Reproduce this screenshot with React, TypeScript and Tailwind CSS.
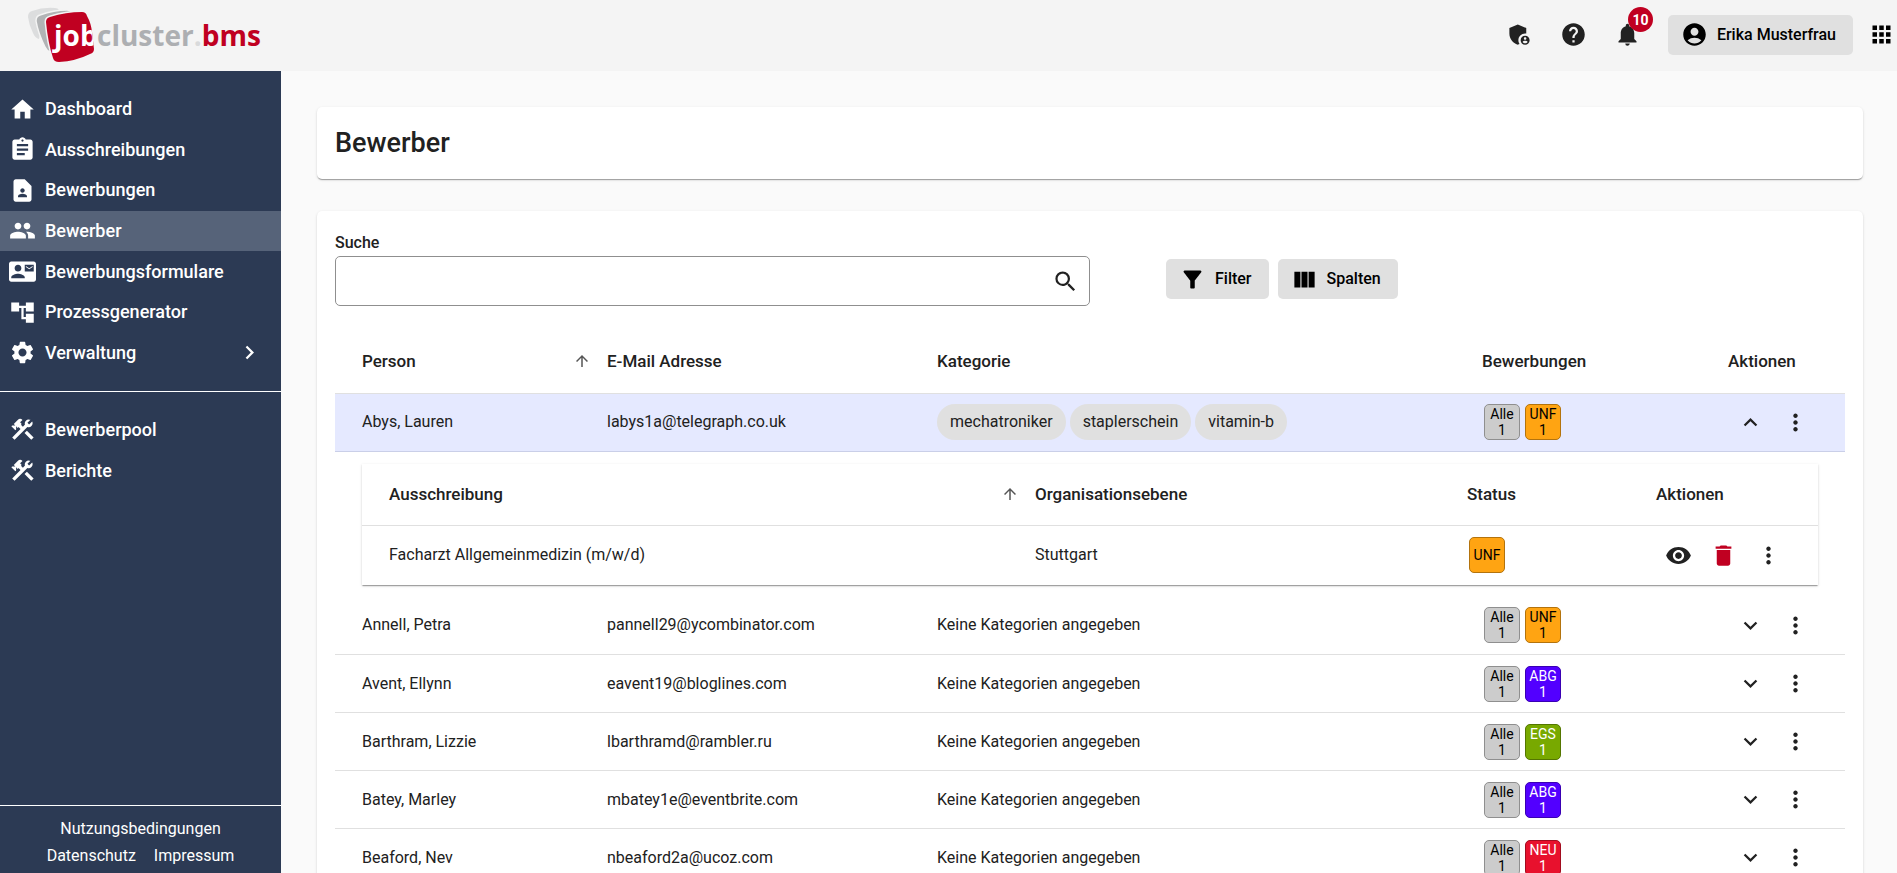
import type { ReactNode } from "react";
import type { IconType } from "react-icons";
import {
  MdAccountCircle,
  MdAccountTree,
  MdAdminPanelSettings,
  MdApps,
  MdArrowUpward,
  MdAssignment,
  MdChevronRight,
  MdConstruction,
  MdContactMail,
  MdContactPage,
  MdDelete,
  MdExpandLess,
  MdExpandMore,
  MdFilterAlt,
  MdHelp,
  MdHome,
  MdMoreVert,
  MdNotifications,
  MdPeople,
  MdSearch,
  MdSettings,
  MdViewColumn,
  MdVisibility,
} from "react-icons/md";

const card =
  "rounded-[5px] bg-white shadow-[0_2px_1px_-1px_rgba(0,0,0,0.2),0_1px_1px_0_rgba(0,0,0,0.14),0_1px_3px_0_rgba(0,0,0,0.12)]";

type NavEntry = { label: string; icon: IconType; active?: boolean; nested?: boolean };

const mainNav: NavEntry[] = [
  { label: "Dashboard", icon: MdHome },
  { label: "Ausschreibungen", icon: MdAssignment },
  { label: "Bewerbungen", icon: MdContactPage },
  { label: "Bewerber", icon: MdPeople, active: true },
  { label: "Bewerbungsformulare", icon: MdContactMail },
  { label: "Prozessgenerator", icon: MdAccountTree },
  { label: "Verwaltung", icon: MdSettings, nested: true },
];

const extraNav: NavEntry[] = [
  { label: "Bewerberpool", icon: MdConstruction },
  { label: "Berichte", icon: MdConstruction },
];

const statusStyles = {
  Alle: "bg-[#cccccc] border-[#8f8f8f] text-black",
  UNF: "bg-[#ffa412] border-[#b3730d] text-black",
  ABG: "bg-[#5200ff] border-[#3900b3] text-white",
  EGS: "bg-[#78a900] border-[#547600] text-white",
  NEU: "bg-[#e8112d] border-[#a20c1f] text-white",
};
type Status = keyof typeof statusStyles;

type Person = { name: string; email: string; tags?: string[]; status: Status; open?: boolean };

const people: Person[] = [
  {
    name: "Abys, Lauren",
    email: "labys1a@telegraph.co.uk",
    tags: ["mechatroniker", "staplerschein", "vitamin-b"],
    status: "UNF",
    open: true,
  },
  { name: "Annell, Petra", email: "pannell29@ycombinator.com", status: "UNF" },
  { name: "Avent, Ellynn", email: "eavent19@bloglines.com", status: "ABG" },
  { name: "Barthram, Lizzie", email: "lbarthramd@rambler.ru", status: "EGS" },
  { name: "Batey, Marley", email: "mbatey1e@eventbrite.com", status: "ABG" },
  { name: "Beaford, Nev", email: "nbeaford2a@ucoz.com", status: "NEU" },
];

function Logo() {
  return (
    <a href="#" aria-label="jobcluster.bms" className="block">
      <svg width="250" height="60" viewBox="0 0 250 60" className="block">
        <defs>
          <clipPath id="tile">
            <path d="M25 17Q25 13 29 12Q45 7 61 7Q65 7 66 11Q70 18 71 27Q72 36 73 44Q73 48 69 49Q55 56 38 57Q33 57 32 53Q27 38 25 17Z" />
          </clipPath>
        </defs>
        <path
          d="M7 12Q7 7 11 6Q22 2 34 3Q37 3 38 5L22 14L18 34Q14 33 12 28Q8 20 7 12Z"
          fill="#dcddde"
        />
        <path
          d="M15 16Q15 11 19 10Q33 5 46 5Q50 5 51 9L40 20L29 47Q26 46 24 42Q17 28 15 16Z"
          fill="#b1b3b5"
          stroke="#f4f4f4"
          strokeWidth="1.5"
        />
        <path
          d="M25 17Q25 13 29 12Q45 7 61 7Q65 7 66 11Q70 18 71 27Q72 36 73 44Q73 48 69 49Q55 56 38 57Q33 57 32 53Q27 38 25 17Z"
          fill="#c00021"
          stroke="#f4f4f4"
          strokeWidth="3"
          paintOrder="stroke"
        />
        <g fontFamily="'Open Sans', sans-serif" fontWeight="700" fontSize="28">
          <text x="33" y="41" fill="#fff" clipPath="url(#tile)">job</text>
          <text x="76" y="41" fill="#adafb2">
            cluster<tspan fill="#d9dadb">.</tspan>
            <tspan fill="#c00021">bms</tspan>
          </text>
        </g>
      </svg>
    </a>
  );
}

function NavLink({ entry }: { entry: NavEntry }) {
  const Icon = entry.icon;
  return (
    <a
      href="#"
      aria-current={entry.active ? "page" : undefined}
      className={`flex items-center gap-[9px] pr-[18px] pl-[9px] text-lg/6 font-medium text-white ${
        entry.active ? "bg-[#566379]" : ""
      }`}
    >
      <Icon size={27} className="shrink-0" />
      <span className="grow">{entry.label}</span>
      {entry.nested && <MdChevronRight size={27} />}
    </a>
  );
}

function Badge({ status, count }: { status: Status; count?: number }) {
  return (
    <span
      className={`flex size-9 flex-col items-center justify-center rounded-[5px] border text-sm/4 ${statusStyles[status]}`}
    >
      <span>{status}</span>
      {count !== undefined && <span>{count}</span>}
    </span>
  );
}

function IconButton({ label, children }: { label: string; children: ReactNode }) {
  return (
    <button type="button" aria-label={label} className="flex w-[45px] items-center justify-center">
      {children}
    </button>
  );
}

function GreyButton({ icon: Icon, children }: { icon: IconType; children: ReactNode }) {
  return (
    <button
      type="button"
      className="flex h-10 items-center gap-[9px] rounded-[5px] bg-[#e0e0e0] pr-[17px] pl-[13px] text-base font-medium text-black"
    >
      <Icon size={27} />
      {children}
    </button>
  );
}

function SortHeader({ children }: { children: ReactNode }) {
  return (
    <span className="flex items-center justify-between pr-4">
      {children}
      <MdArrowUpward size={18} className="text-[#555]" />
    </span>
  );
}

function Applications() {
  return (
    <table className={`w-full table-fixed border-collapse ${card} rounded-none`}>
      <colgroup>
        <col className="w-[673px]" />
        <col />
        <col className="w-[189px]" />
        <col className="w-[162px]" />
      </colgroup>
      <thead>
        <tr className="h-[62px] border-b border-[#e0e0e0] text-left text-[17px]/6">
          <th className="pl-[27px] font-medium"><SortHeader>Ausschreibung</SortHeader></th>
          <th className="font-medium">Organisationsebene</th>
          <th className="font-medium">Status</th>
          <th className="font-medium">Aktionen</th>
        </tr>
      </thead>
      <tbody>
        <tr className="h-[59px]">
          <td className="pl-[27px]">Facharzt Allgemeinmedizin (m/w/d)</td>
          <td>Stuttgart</td>
          <td><div className="pl-0.5"><Badge status="UNF" /></div></td>
          <td>
            <div className="flex">
              <IconButton label="Ansehen"><MdVisibility size={27} /></IconButton>
              <IconButton label="Löschen"><MdDelete size={27} className="text-[#c00021]" /></IconButton>
              <IconButton label="Mehr"><MdMoreVert size={27} /></IconButton>
            </div>
          </td>
        </tr>
      </tbody>
    </table>
  );
}

function PersonRows({ person }: { person: Person }) {
  return (
    <>
      <tr className={`h-[58px] border-b ${person.open ? "border-[#cacfe8] bg-[#e5e9ff]" : "border-[#e0e0e0]"}`}>
        <td className="pl-[27px]">{person.name}</td>
        <td>{person.email}</td>
        <td>
          {person.tags ? (
            <ul className="flex gap-1">
              {person.tags.map((tag) => (
                <li key={tag} className="flex h-9 items-center rounded-full bg-[#e0e0e0] px-[13px]">
                  {tag}
                </li>
              ))}
            </ul>
          ) : (
            "Keine Kategorien angegeben"
          )}
        </td>
        <td>
          <div className="flex gap-[5px] pl-0.5">
            <Badge status="Alle" count={1} />
            <Badge status={person.status} count={1} />
          </div>
        </td>
        <td>
          <div className="flex">
            <IconButton label={person.open ? "Zuklappen" : "Aufklappen"}>
              {person.open ? <MdExpandLess size={27} /> : <MdExpandMore size={27} />}
            </IconButton>
            <IconButton label="Mehr"><MdMoreVert size={27} /></IconButton>
          </div>
        </td>
      </tr>
      {person.open && (
        <tr>
          <td colSpan={5} className="px-[27px] py-3">
            <Applications />
          </td>
        </tr>
      )}
    </>
  );
}

export default function App() {
  return (
    <div className="flex h-screen flex-col overflow-hidden bg-[#fafafa] font-['Roboto',sans-serif] text-base text-[#212121]">
      <header className="flex h-[71px] shrink-0 items-center justify-between bg-[#f4f4f4] pr-0.5 pb-0.5 pl-[21px]">
        <Logo />
        <div className="flex items-center">
          <div className="flex items-center gap-[27px] pr-[27px]">
            <button type="button" aria-label="Administration"><MdAdminPanelSettings size={27} /></button>
            <button type="button" aria-label="Hilfe"><MdHelp size={27} /></button>
            <button type="button" aria-label="Benachrichtigungen" className="relative">
              <MdNotifications size={27} />
              <span className="absolute -top-[14px] left-[14px] flex size-[25px] items-center justify-center rounded-full bg-[#c00021] text-sm font-bold text-white">
                10
              </span>
            </button>
          </div>
          <GreyButton icon={MdAccountCircle}>Erika Musterfrau</GreyButton>
          <button type="button" aria-label="Apps" className="ml-[15px] text-black"><MdApps size={27} /></button>
        </div>
      </header>

      <div className="flex min-h-0 grow">
        <aside className="flex w-[281px] shrink-0 flex-col bg-[#2c3a54]">
          <nav className="grow">
            <div className="grid h-[321px] auto-rows-fr border-b border-white py-[18px]">
              {mainNav.map((entry) => <NavLink key={entry.label} entry={entry} />)}
            </div>
            <div className="grid auto-rows-[41px] pt-[17px]">
              {extraNav.map((entry) => <NavLink key={entry.label} entry={entry} />)}
            </div>
          </nav>
          <div className="flex flex-wrap justify-center gap-x-[18px] border-t border-white px-9 pt-[9px] pb-1 text-base/[27px] text-white">
            <a href="#">Nutzungsbedingungen</a>
            <a href="#">Datenschutz</a>
            <a href="#">Impressum</a>
          </div>
        </aside>

        <main className="min-w-0 grow overflow-hidden py-9 pr-[34px] pl-9">
          <section className={`${card} p-[18px]`}>
            <h1 className="text-[27px]/9 font-medium">Bewerber</h1>
          </section>

          <section className={`${card} mt-8 p-[18px]`}>
            <div className="flex items-end gap-[76px]">
              <div className="w-1/2">
                <label htmlFor="search" className="block pt-0.5 pb-px text-base/6 font-medium">Suche</label>
                <div className="flex h-[50px] items-center rounded-[5px] border border-[#8f8f8f] pr-[10px]">
                  <input id="search" type="text" className="h-full min-w-0 grow px-3 outline-none" />
                  <button type="button" aria-label="Suchen"><MdSearch size={27} /></button>
                </div>
              </div>
              <div className="flex gap-[9px] pb-[7px]">
                <GreyButton icon={MdFilterAlt}>Filter</GreyButton>
                <GreyButton icon={MdViewColumn}>Spalten</GreyButton>
              </div>
            </div>

            <table className="mt-6 w-full table-fixed border-collapse">
              <colgroup>
                <col className="w-[272px]" />
                <col className="w-[330px]" />
                <col />
                <col className="w-[246px]" />
                <col className="w-[117px]" />
              </colgroup>
              <thead>
                <tr className="h-[63px] border-b border-[#e0e0e0] text-left text-[17px]/6">
                  <th className="pl-[27px] font-medium"><SortHeader>Person</SortHeader></th>
                  <th className="font-medium">E-Mail Adresse</th>
                  <th className="font-medium">Kategorie</th>
                  <th className="font-medium">Bewerbungen</th>
                  <th className="font-medium">Aktionen</th>
                </tr>
              </thead>
              <tbody>
                {people.map((person) => <PersonRows key={person.name} person={person} />)}
              </tbody>
            </table>
          </section>
        </main>
      </div>
    </div>
  );
}
